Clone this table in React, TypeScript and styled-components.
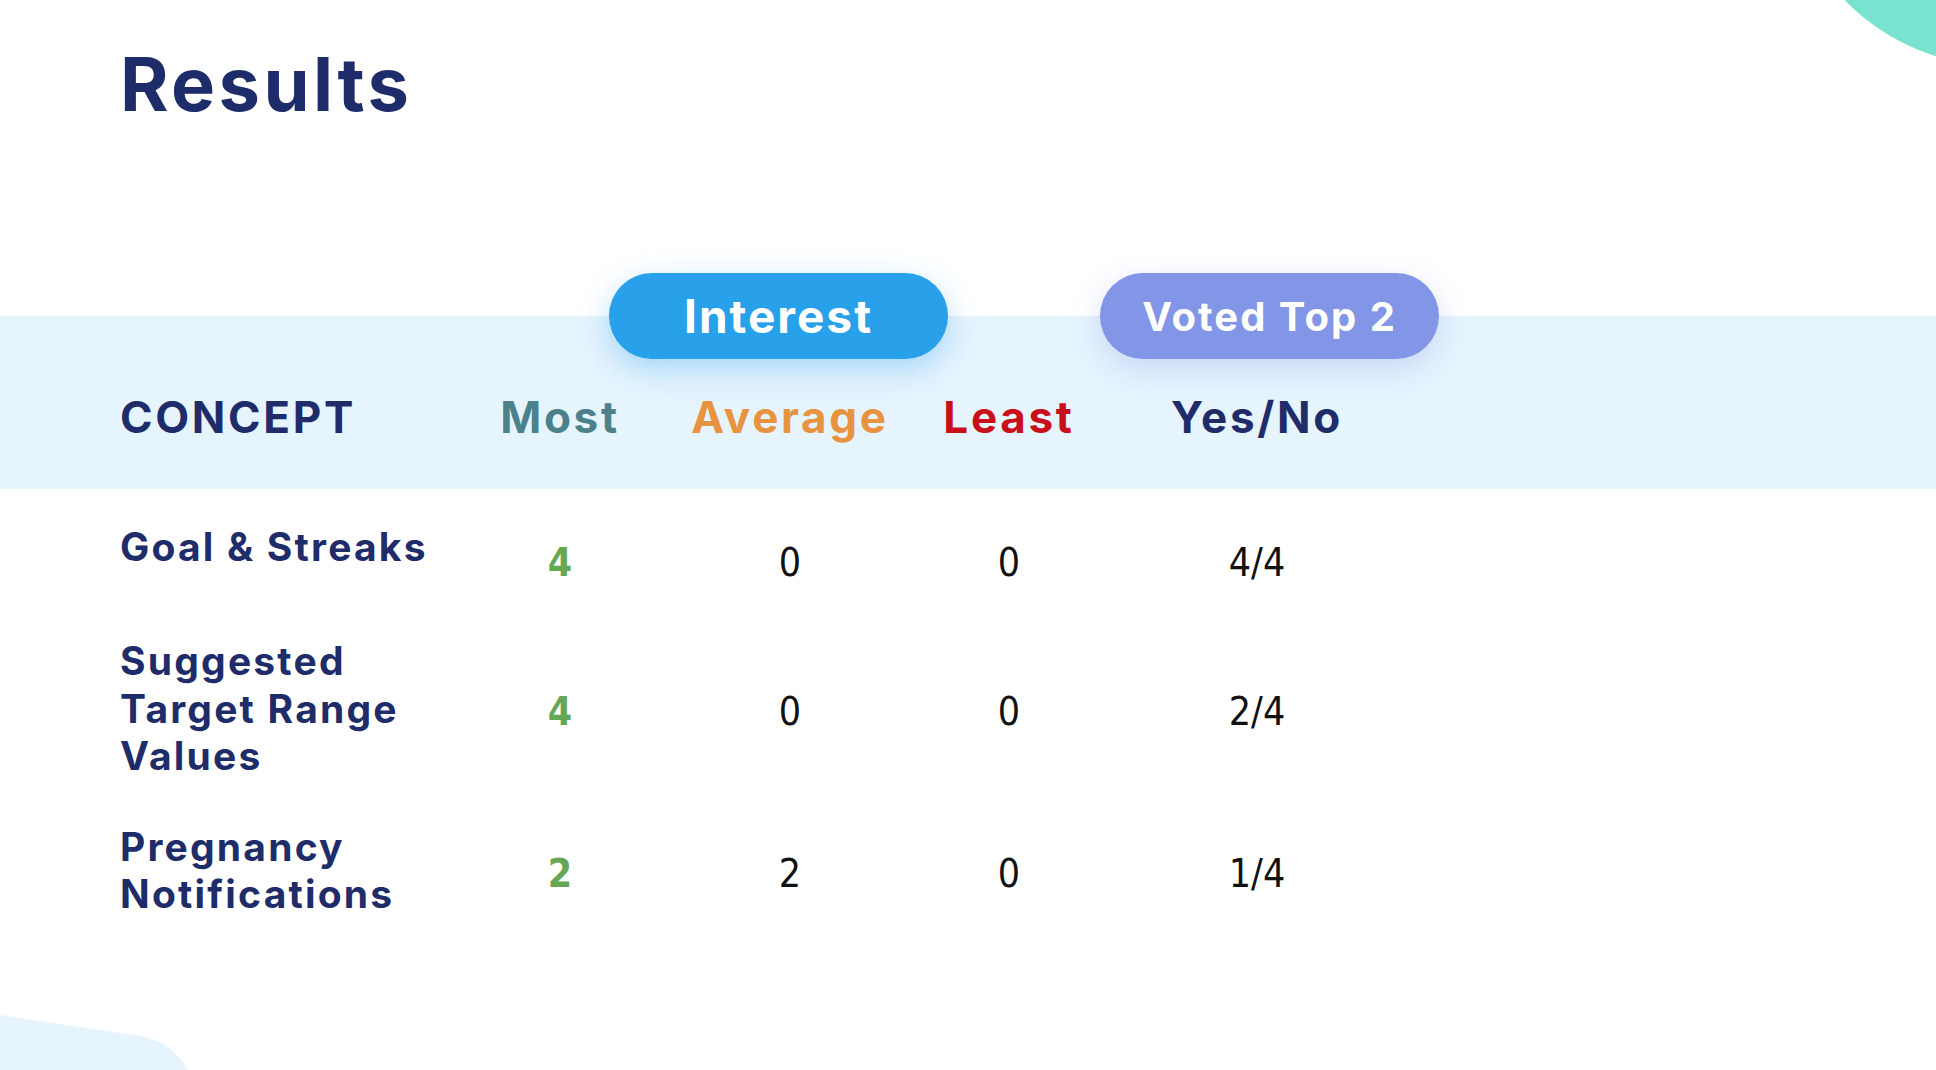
import React from "react";
import styled, { createGlobalStyle } from "styled-components";

const colors = {
  navy: "#1f2c6a",
  band: "#e6f4fe",
  most: "#4b818b",
  average: "#e8933f",
  least: "#c80f1a",
  green: "#65a752",
  interest: "#28a0ea",
  voted: "#8395e6",
  teal: "#79e3d0",
};

const GlobalStyle = createGlobalStyle`
  html, body {
    margin: 0;
    padding: 0;
    background: #ffffff;
  }
  * {
    box-sizing: border-box;
  }
`;

const Page = styled.div`
  position: relative;
  width: 100%;
  height: 1070px;
  overflow: hidden;
  background: #ffffff;
  font-family: Inter, "Open Sans", sans-serif;
  color: ${colors.navy};
  padding-top: 47px;
`;

const CornerBlob = styled.div`
  position: absolute;
  top: -366px;
  right: -280px;
  width: 432px;
  height: 432px;
  border-radius: 50%;
  background: ${colors.teal};
`;

const BottomShape = styled.svg`
  position: absolute;
  left: 0;
  bottom: 0;
  width: 200px;
  height: 60px;
`;

const Title = styled.h1`
  margin: 0 0 0 120px;
  font-size: 74px;
  line-height: 1;
  font-weight: 700;
  letter-spacing: 3.4px;
  color: ${colors.navy};
`;

const PillRow = styled.div`
  position: relative;
  z-index: 1;
  display: grid;
  grid-template-columns: 489px 339px 152px 339px;
  margin-top: 152px;
  margin-bottom: -43px;
  padding-left: 120px;
`;

const Pill = styled.div<{ $bg: string; $glow: string; $size: number; $col: number }>`
  grid-column: ${(p) => p.$col};
  height: 86px;
  border-radius: 43px;
  display: flex;
  align-items: center;
  justify-content: center;
  background: ${(p) => p.$bg};
  box-shadow: 0 10px 30px ${(p) => p.$glow};
  color: #ffffff;
  font-weight: 700;
  font-size: ${(p) => p.$size}px;
  letter-spacing: 2px;
`;

const columns = "350px 180px 280px 158px 338px";

const HeaderBand = styled.div`
  background: ${colors.band};
  height: 173px;
  padding: 79px 0 0 120px;
`;

const Grid = styled.div`
  display: grid;
  grid-template-columns: ${columns};
  align-items: center;
`;

const HeadCell = styled.div<{ $color: string; $center?: boolean }>`
  font-size: 44px;
  line-height: 1;
  font-weight: 700;
  color: ${(p) => p.$color};
  text-align: ${(p) => (p.$center ? "center" : "left")};
  letter-spacing: 2.7px;
`;

const Rows = styled.div`
  display: flex;
  flex-direction: column;
  gap: 43px;
  padding: 34px 0 0 120px;
`;

const Row = styled(Grid)<{ $minHeight?: number }>`
  min-height: ${(p) => p.$minHeight ?? 0}px;
`;

const Concept = styled.div<{ $top?: boolean }>`
  align-self: ${(p) => (p.$top ? "start" : "center")};
  font-size: 39px;
  line-height: 47.5px;
  font-weight: 700;
  color: ${colors.navy};
  letter-spacing: 2.2px;
`;

const Value = styled.div<{ $green?: boolean }>`
  padding-top: 7px;
  text-align: center;
  font-family: "DejaVu Sans Condensed", "DejaVu Sans", sans-serif;
  font-stretch: condensed;
  font-size: 39px;
  line-height: 1;
  font-weight: ${(p) => (p.$green ? 700 : 400)};
  color: ${(p) => (p.$green ? colors.green : "#111111")};
`;

type Result = {
  concept: string[];
  most: number;
  average: number;
  least: number;
  votes: string;
  minHeight?: number;
  top?: boolean;
};

const results: Result[] = [
  { concept: ["Goal & Streaks"], most: 4, average: 0, least: 0, votes: "4/4", minHeight: 71, top: true },
  { concept: ["Suggested", "Target Range", "Values"], most: 4, average: 0, least: 0, votes: "2/4" },
  { concept: ["Pregnancy", "Notifications"], most: 2, average: 2, least: 0, votes: "1/4" },
];

export default function App() {
  return (
    <>
      <GlobalStyle />
      <Page>
        <CornerBlob />
        <BottomShape viewBox="0 0 200 60">
          <path d="M0 5 L140 26 Q172 32 188 60 L0 60 Z" fill={colors.band} />
        </BottomShape>

        <Title>Results</Title>

        <PillRow>
          <Pill $col={2} $bg={colors.interest} $glow="rgba(40, 160, 234, 0.35)" $size={46}>
            Interest
          </Pill>
          <Pill $col={4} $bg={colors.voted} $glow="rgba(131, 149, 230, 0.3)" $size={40}>
            Voted Top 2
          </Pill>
        </PillRow>

        <HeaderBand>
          <Grid>
            <HeadCell $color={colors.navy}>CONCEPT</HeadCell>
            <HeadCell $color={colors.most} $center>Most</HeadCell>
            <HeadCell $color={colors.average} $center>Average</HeadCell>
            <HeadCell $color={colors.least} $center>Least</HeadCell>
            <HeadCell $color={colors.navy} $center>Yes/No</HeadCell>
          </Grid>
        </HeaderBand>

        <Rows>
          {results.map((r) => (
            <Row key={r.concept.join(" ")} $minHeight={r.minHeight}>
              <Concept $top={r.top}>
                {r.concept.map((line) => (
                  <div key={line}>{line}</div>
                ))}
              </Concept>
              <Value $green>{r.most}</Value>
              <Value>{r.average}</Value>
              <Value>{r.least}</Value>
              <Value>{r.votes}</Value>
            </Row>
          ))}
        </Rows>
      </Page>
    </>
  );
}
